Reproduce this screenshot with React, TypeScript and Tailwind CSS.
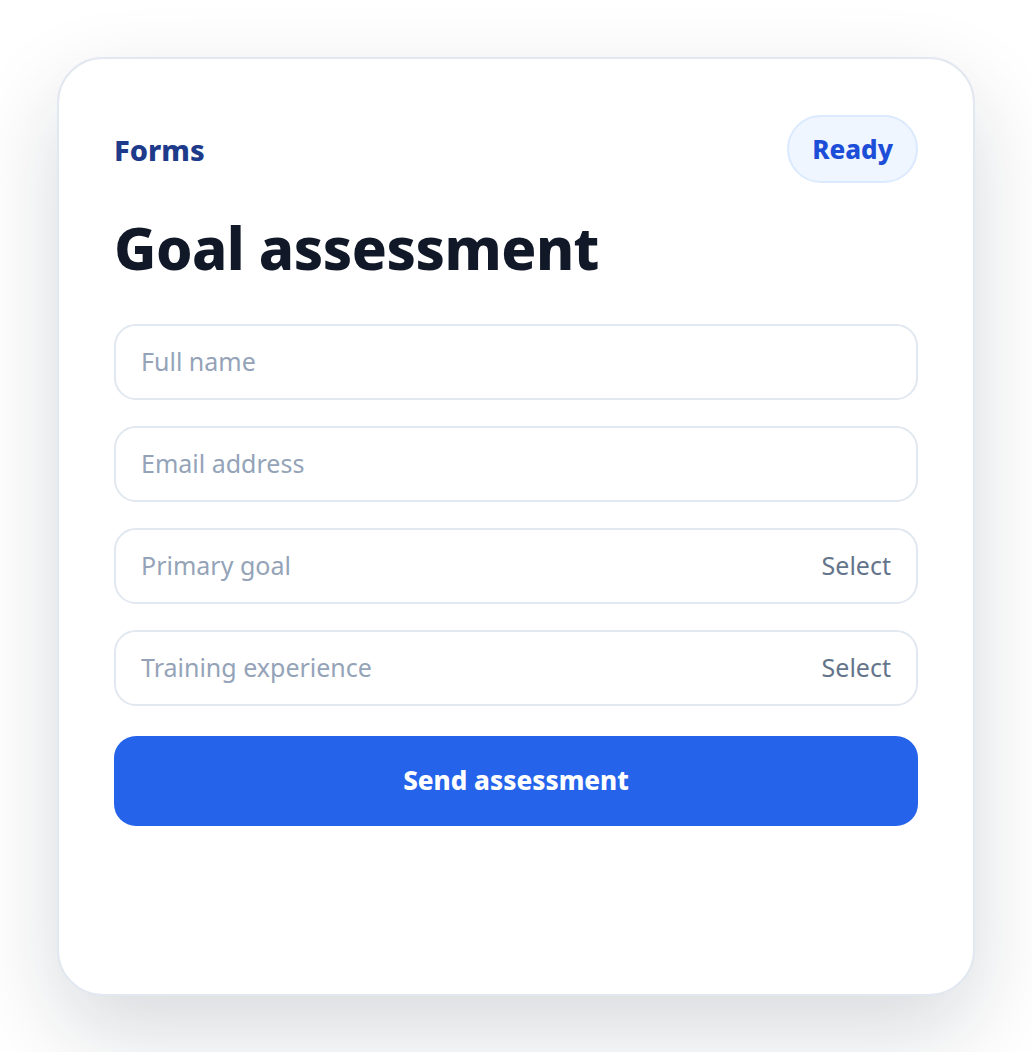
export default function App() {
  const fields = [
    { label: "Full name", select: false },
    { label: "Email address", select: false },
    { label: "Primary goal", select: true },
    { label: "Training experience", select: true },
  ];

  return (
    <div
      className="min-h-screen w-full bg-white px-[57px] pt-[57px] pb-[57px]"
      style={{ fontFamily: '"Noto Sans", "Open Sans", sans-serif' }}
    >
      <div className="h-[939px] w-full rounded-[46px] border-2 border-[#e2e8f0] bg-white px-[55px] pt-[56px] shadow-[0_36px_90px_rgba(15,23,42,0.16)]">
        <div className="flex items-center justify-between">
          <span className="text-[29px] font-extrabold leading-none text-[#1e3a8a]">Forms</span>
          <span className="flex h-[68px] items-center rounded-full border-2 border-[#dbeafe] bg-[#eff6ff] px-[23px] text-[26px] font-extrabold text-[#1d4ed8]">
            Ready
          </span>
        </div>

        <h1 className="mt-[32px] text-[58px] font-extrabold leading-[1.15] tracking-[-0.5px] text-[#111827]">
          Goal assessment
        </h1>

        <div className="mt-[42px] flex flex-col gap-[26px]">
          {fields.map((f) => (
            <div
              key={f.label}
              className="flex h-[76px] items-center justify-between rounded-[22px] border-2 border-[#e2e8f0] bg-white px-[25px] text-[25px]"
            >
              <span className="text-[#94a3b8]">{f.label}</span>
              {f.select && <span className="text-[#64748b]">Select</span>}
            </div>
          ))}
        </div>

        <button className="mt-[30px] flex h-[90px] w-full items-center justify-center rounded-[22px] bg-[#2563eb] text-[26px] font-extrabold text-white">
          Send assessment
        </button>
      </div>
    </div>
  );
}
